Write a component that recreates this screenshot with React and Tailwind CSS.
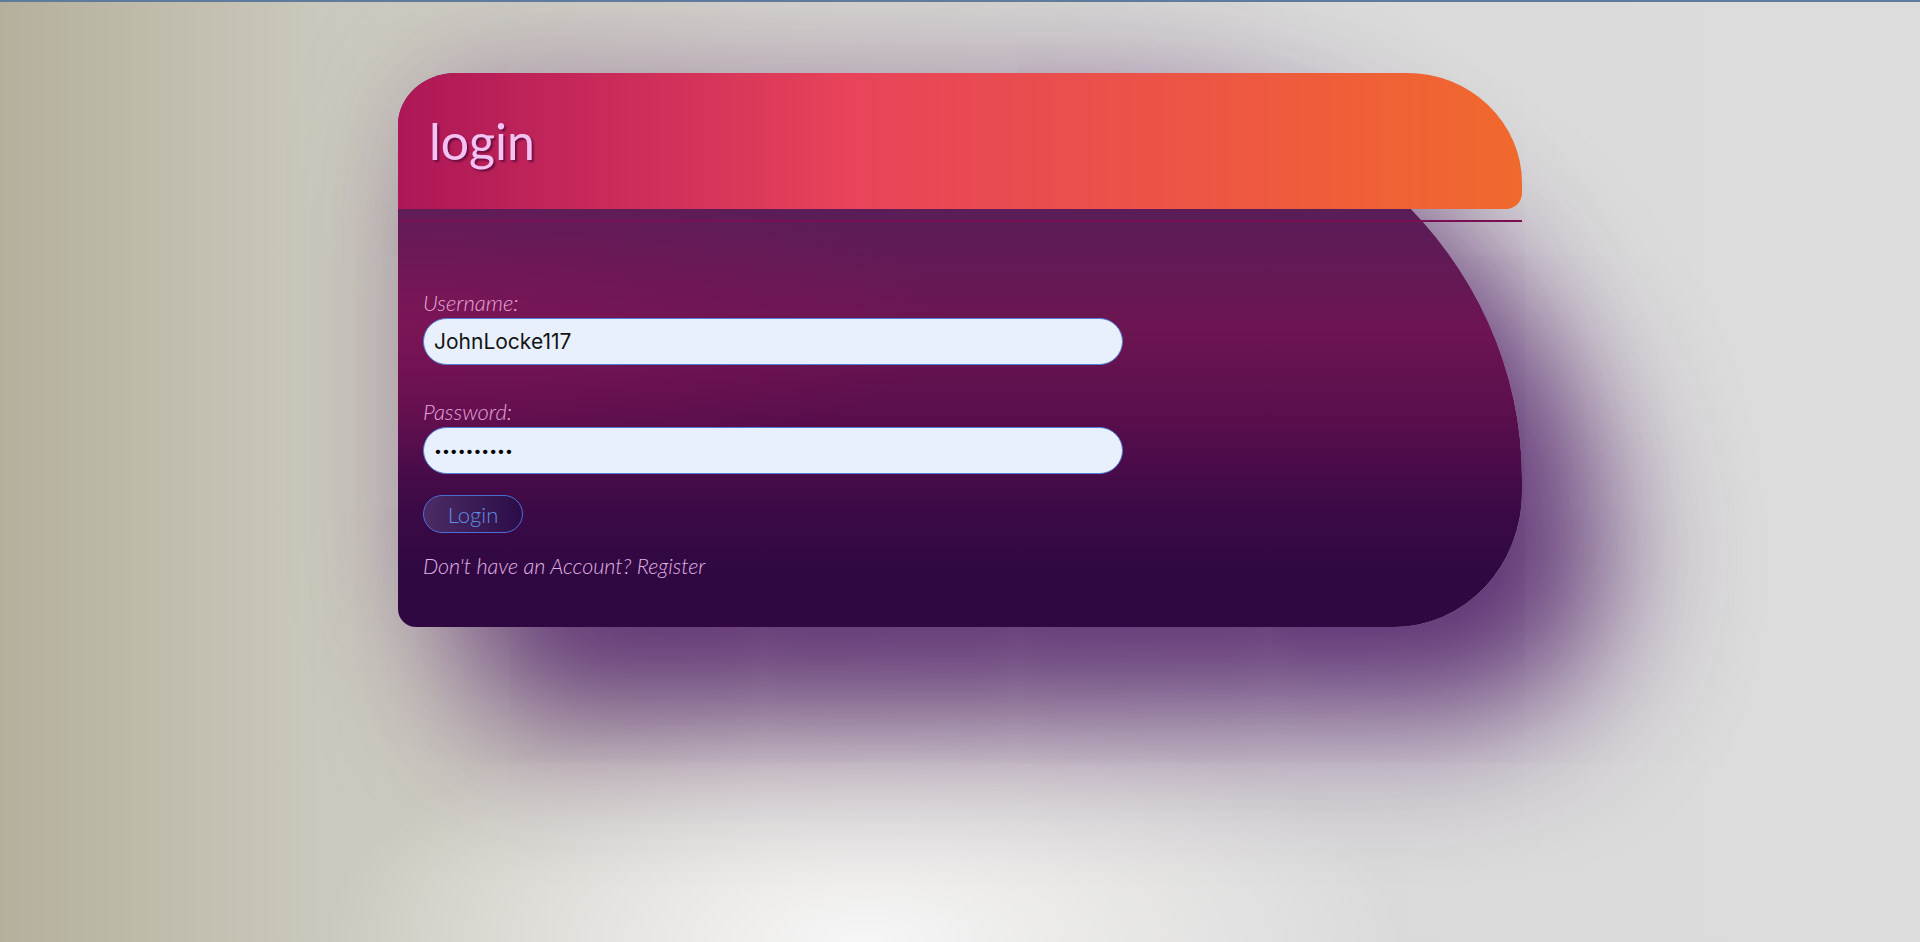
import React from 'react';

const LoginCard = () => {
  return (
    <div className="mx-auto mt-[71px] w-[1124px] rounded-tl-[58px_52px] rounded-tr-[440px_405px] rounded-br-[128px_135px] rounded-bl-[18px] bg-[radial-gradient(ellipse_at_0%_45%,rgba(135,20,88,0.55)_0%,rgba(135,20,88,0)_35%),linear-gradient(to_bottom,#5b1d57_0%,#5b1d57_26%,#6c1552_46%,#5a0e4c_62%,#3c0a46_78%,#2f0842_90%,#2f0842_100%)] pb-[49px] shadow-[80px_90px_140px_rgba(75,25,100,0.85),20px_0px_120px_rgba(110,70,130,0.35)]">
      <div className="flex h-[136px] items-center rounded-tl-[58px_52px] rounded-tr-[115px_110px] rounded-br-[16px] bg-[linear-gradient(to_right,#ad1757_0%,#d1305a_24%,#e8435a_40%,#ec5248_66%,#f0692c_100%)] px-[31px]">
        <h1 className="font-['Lato',sans-serif] text-[50px] leading-none text-[#f4c2f2] [text-shadow:2px_2px_2px_rgba(95,10,60,0.85)]">
          login
        </h1>
      </div>
      <div className="mt-[11px] h-[2px] bg-[#7c0e52]" />

      <form className="flex flex-col items-start pl-[25px] font-['Lato',sans-serif]" onSubmit={(e) => e.preventDefault()}>
        <label className="mt-[69px] text-[22px] font-light italic leading-[24px] text-[#e6a4da]">Username:</label>
        <input
          type="text"
          defaultValue="JohnLocke117"
          className="mt-[3px] h-[47px] w-[700px] rounded-full border border-[#4f7fd6] bg-[#e8f0fe] px-[10px] font-['Inter',sans-serif] text-[21px] text-[#141414] outline-none"
        />

        <label className="mt-[35px] text-[22px] font-light italic leading-[24px] text-[#e6a4da]">Password:</label>
        <input
          type="password"
          defaultValue="••••••••••"
          className="mt-[3px] h-[47px] w-[700px] rounded-full border border-[#4f7fd6] bg-[#e8f0fe] px-[10px] font-['Inter',sans-serif] text-[14px] text-black outline-none"
        />

        <button
          type="submit"
          className="mt-[21px] h-[38px] w-[100px] rounded-full border border-[#4c6fd6] bg-[linear-gradient(to_right,#4c2c64,#2c0c48)] text-[22px] font-light text-[#5e8ee0]"
        >
          Login
        </button>

        <p className="mt-[21px] text-[21.5px] font-light italic leading-[24px] text-[#e2b2e2]">
          Don't have an Account? Register
        </p>
      </form>
    </div>
  );
};

export default function App() {
  return (
    <div className="min-h-screen w-full overflow-hidden border-t-2 border-[#5f7b9c] bg-[radial-gradient(ellipse_28%_26%_at_45%_100%,rgba(246,246,246,1)_0%,rgba(246,246,246,0)_100%),linear-gradient(to_right,#b4b09c_0%,#c2bfb0_10%,#cbc9bd_17%,#d6d4ce_40%,#dadada_70%,#dcdcdc_100%)]">
      <LoginCard />
    </div>
  );
}
